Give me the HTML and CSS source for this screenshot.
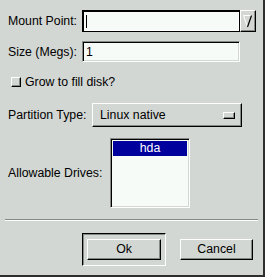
FILE: index.html
```html
<!DOCTYPE html>
<html lang="en">
<head>
  <meta charset="UTF-8" />
  <title>Add Partition</title>
  <link rel="stylesheet" href="styles.css">
</head>
<body>
  <div class="dialog">
    <div class="row row-mount">
      <span class="label label-entry">Mount Point:</span>
      <div class="entry entry-focus"><span class="caret"></span></div>
      <div class="combo-btn">
        <svg width="16" height="22" viewBox="0 0 16 22">
          <path d="M3.5 5.5 H11.5" stroke="#ffffff" stroke-width="1" fill="none"/>
          <path d="M3.5 5.5 L7.5 17" stroke="#ffffff" stroke-width="1" fill="none"/>
          <path d="M11.5 5.5 L7.5 17" stroke="#000000" stroke-width="1.2" fill="none"/>
        </svg>
      </div>
    </div>

    <div class="row row-size">
      <span class="label label-entry">Size (Megs):</span>
      <div class="entry">1</div>
    </div>

    <div class="row row-check">
      <span class="checkbox"></span>
      <span class="label">Grow to fill disk?</span>
    </div>

    <div class="row row-type">
      <span class="label label-type">Partition Type:</span>
      <div class="option-menu">
        <span>Linux native</span>
        <span class="indicator"></span>
      </div>
    </div>

    <div class="row row-drives">
      <span class="label label-drives">Allowable Drives:</span>
      <div class="list">
        <div class="list-item selected">hda</div>
      </div>
    </div>

    <div class="separator"></div>

    <div class="buttons">
      <div class="default-frame">
        <div class="btn">Ok</div>
      </div>
      <div class="btn btn-cancel">Cancel</div>
    </div>
  </div>
</body>
</html>
```

FILE: styles.css
```css
body {
  margin: 0;
  background: #d3d7d3;
  font-family: "Liberation Sans", Arial, sans-serif;
  font-size: 12.3px;
  color: #000;
}
.dialog {
  box-sizing: border-box;
  width: 265px;
  height: 277px;
  border-right: 2px solid #2e2e2e;
  border-bottom: 2px solid #2e2e2e;
  background: #d3d7d3;
  padding-top: 10px;
}
.row {
  display: flex;
  align-items: center;
  padding-left: 8px;
}
.label {
  white-space: nowrap;
}
.label-entry {
  width: 74px;
}
.label-type {
  width: 84px;
}
.label-drives {
  width: 102px;
}

.entry {
  box-sizing: border-box;
  width: 158px;
  height: 22px;
  background: #f7fbf7;
  border: 1px solid;
  border-color: #868a86 #ffffff #ffffff #868a86;
  box-shadow: inset 1px 1px 0 #000, inset -1px -1px 0 #d3d7d3;
  padding: 3px 3px;
  line-height: 14px;
}
.entry-focus {
  border-color: #000;
  box-shadow: inset 1px 1px 0 #000, inset -1px -1px 0 #ffffff;
  position: relative;
}
.caret {
  position: absolute;
  left: 3px;
  top: 4px;
  width: 1px;
  height: 13px;
  background: #000;
}
.row-size .entry {
  height: 21px;
}
.combo-btn {
  box-sizing: border-box;
  width: 16px;
  height: 22px;
  background: #d3d7d3;
  border: 1px solid;
  border-color: #ffffff #000 #000 #ffffff;
  box-shadow: inset -1px -1px 0 #868a86;
  display: flex;
}
.combo-btn svg {
  margin: -1px;
}
.row-size {
  margin-top: 9px;
}

.row-check {
  margin-top: 13px;
  height: 14px;
}
.checkbox {
  box-sizing: border-box;
  width: 10px;
  height: 10px;
  margin-left: 3px;
  margin-right: 4px;
  background: #d3d7d3;
  border: 1px solid;
  border-color: #ffffff #000 #000 #ffffff;
  box-shadow: inset -1px -1px 0 #868a86;
}

.row-type {
  margin-top: 14px;
}
.option-menu {
  box-sizing: border-box;
  width: 150px;
  height: 24px;
  display: flex;
  align-items: center;
  justify-content: space-between;
  padding: 0 6px 0 7px;
  background: #d3d7d3;
  border: 1px solid;
  border-color: #ffffff #000 #000 #ffffff;
  box-shadow: inset -1px -1px 0 #868a86;
}
.indicator {
  box-sizing: border-box;
  width: 12px;
  height: 7px;
  border: 1px solid;
  border-color: #ffffff #000 #000 #ffffff;
  box-shadow: inset -1px -1px 0 #868a86;
}

.row-drives {
  margin-top: 11px;
}
.list {
  box-sizing: border-box;
  width: 80px;
  height: 70px;
  background: #f7fbf7;
  border: 1px solid;
  border-color: #868a86 #ffffff #ffffff #868a86;
  box-shadow: inset 1px 1px 0 #000, inset -1px -1px 0 #d3d7d3;
  padding: 2px;
}
.list-item {
  height: 15px;
  line-height: 15px;
  text-align: center;
}
.selected {
  background: #00009c;
  color: #ffffff;
}

.separator {
  margin: 11px 5px 0 5px;
  border-top: 1px solid #868a86;
  border-bottom: 1px solid #ffffff;
  height: 0;
}

.buttons {
  display: flex;
  align-items: center;
  margin-top: 12px;
  padding-left: 82px;
}
.default-frame {
  box-sizing: border-box;
  width: 84px;
  height: 33px;
  border: 1px solid;
  border-color: #000 #ffffff #ffffff #000;
  box-shadow: inset 1px 1px 0 #868a86;
  padding: 5px 0 0 4px;
}
.btn {
  box-sizing: border-box;
  width: 74px;
  height: 21px;
  line-height: 18px;
  text-align: center;
  background: #d3d7d3;
  border: 1px solid;
  border-color: #ffffff #000 #000 #ffffff;
  box-shadow: inset -1px -1px 0 #868a86;
}
.btn-cancel {
  width: 73px;
  margin-left: 14px;
}
```
